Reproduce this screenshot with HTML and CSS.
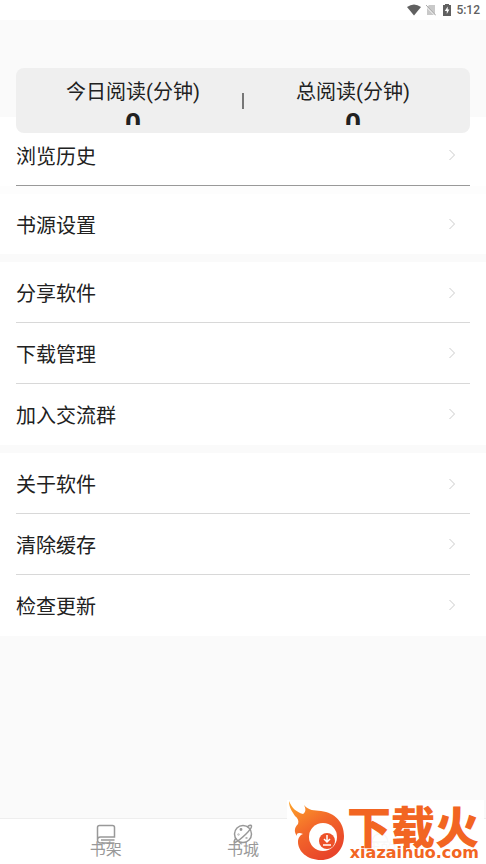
FILE: index.html
```html
<!DOCTYPE html>
<html lang="zh-CN">
<head>
<meta charset="utf-8">
<meta name="viewport" content="width=device-width, initial-scale=1">
<title>我的</title>
<link rel="stylesheet" href="styles.css">
</head>
<body>
<svg class="defs" aria-hidden="true">
  <symbol id="chevron" viewBox="0 0 8 12"><path d="M1.5 1 6.5 6 1.5 11" fill="none" stroke="currentColor"/></symbol>
</svg>
<header class="status">
  <svg class="wifi" viewBox="0 0 14 12" aria-hidden="true"><path d="M0 3Q7-2 14 3L7 11.500Z" fill="currentColor"/></svg>
  <svg class="sim" viewBox="0 0 10 12" aria-hidden="true"><path d="M3 1H9V11L1 3Z M1 4 8 11H1Z" fill="#c9c9c9"/><path d="M0 1 10 11.500" stroke="#aaa"/></svg>
  <svg class="battery" viewBox="0 0 8 12" aria-hidden="true"><path d="M0 1H2V0H6V1H8V12H0Z" fill="currentColor"/><path d="M4.700 2.500 1.800 7H3.800V10L6.400 5.500H4.700Z" fill="#fff"/></svg>
  <time>5:12</time>
</header>
<main>
  <section class="summary">
    <div class="stat"><span>今日阅读(分钟)</span><strong>0</strong></div>
    <i class="divider"></i>
    <div class="stat"><span>总阅读(分钟)</span><strong>0</strong></div>
  </section>
  <nav class="menu">
    <div class="group history"><a class="row" href="#">浏览历史<svg><use href="#chevron"/></svg></a></div>
    <div class="group single"><a class="row" href="#">书源设置<svg><use href="#chevron"/></svg></a></div>
    <div class="group">
      <a class="row" href="#">分享软件<svg><use href="#chevron"/></svg></a>
      <a class="row" href="#">下载管理<svg><use href="#chevron"/></svg></a>
      <a class="row" href="#">加入交流群<svg><use href="#chevron"/></svg></a>
    </div>
    <div class="group">
      <a class="row" href="#">关于软件<svg><use href="#chevron"/></svg></a>
      <a class="row" href="#">清除缓存<svg><use href="#chevron"/></svg></a>
      <a class="row" href="#">检查更新<svg><use href="#chevron"/></svg></a>
    </div>
  </nav>
</main>
<nav class="tabs">
  <a href="#"><svg viewBox="0 0 20 20" aria-hidden="true"><path d="M1.500 16V3.500Q1.500 1.500 3.500 1.500H16.500Q18.500 1.500 18.500 3.500V13H4.500Q1.500 13 1.500 16Q1.500 19 4.500 19H18.500M5 16H18.500"/></svg>书架</a>
  <a href="#"><svg viewBox="0 0 20 20" aria-hidden="true"><circle cx="10" cy="10" r="8.500"/><path d="M14 3Q18 0 18.500 2Q19 4 13 10T2 18.500Q0 18 3 14"/><circle cx="8" cy="5.500" r=".7"/><circle cx="5.500" cy="10.500" r=".3"/><circle cx="13.500" cy="14" r=".3"/></svg>书城</a>
  <a href="#"><svg viewBox="0 0 20 20" aria-hidden="true"><circle cx="10" cy="6" r="4"/><path d="M2 18Q3 10 10 10T18 18Z"/></svg>我的</a>
</nav>
<aside class="brand">
  <svg class="flame" viewBox="0 0 60 64" aria-hidden="true">
    <defs><linearGradient id="fire" x1="0" y1="0" x2=".6" y2="1"><stop offset="0" stop-color="#fda52b"/><stop offset=".5" stop-color="#f3692a"/><stop offset="1" stop-color="#e8442a"/></linearGradient></defs>
    <path d="M2 1C5 8 9 12 16 14C19 12 19 9 17 5C22 11 27 10 34 11C48 13 57 22 57 36C57 50 47 60 34 60C20 60 11 51 11 42C11 38 13 35 16 34C12 32 9 33 10 36C7 32 7 28 11 24C12 21 11 18 8 16C5 11 2 8 2 1Z" fill="url(#fire)"/>
    <circle cx="36" cy="37" r="14" fill="#fff"/>
    <circle cx="40" cy="41" r="8" fill="#ed5129"/>
    <path d="M40 35V41M37 39 40 42 43 39M36 45H44" fill="none" stroke="#fff" stroke-width="1.500"/>
  </svg>
  <div class="brand-text"><b>下载火</b><span>xiazaihuo.com</span></div>
</aside>
</body>
</html>
```

FILE: styles.css
```css
* { box-sizing: border-box; }
body {
  margin: 0;
  min-height: 100vh;
  display: flex;
  flex-direction: column;
  position: relative;
  background: #fafafa;
  color: #212121;
  font-family: Roboto, "Noto Sans CJK SC", sans-serif;
}
a { color: inherit; text-decoration: none; }
.defs { position: absolute; width: 0; height: 0; }
.status {
  height: 20px;
  padding: 0 6px;
  display: flex;
  align-items: center;
  justify-content: flex-end;
  background: #fff;
  color: #606060;
  font-size: 12px;
  font-weight: 500;
}
.status svg { height: 12px; }
.wifi { width: 14px; margin-right: 5px; }
.sim { width: 10px; margin-right: 7px; }
.battery { width: 8px; margin-right: 5px; }
main { flex: 1; padding-top: 48px; }
.summary {
  position: relative;
  height: 65px;
  margin: 0 16px -16px;
  padding: 8px;
  display: flex;
  align-items: center;
  border-radius: 8px;
  background: #efefef;
}
.stat {
  flex: 1;
  height: 49px;
  overflow: hidden;
  display: flex;
  flex-direction: column;
  align-items: center;
  font-size: 20px;
  line-height: 32px;
}
.stat strong { font-size: 28px; }
.divider { width: 2px; height: 16px; background: #777; }
.menu { display: flex; flex-direction: column; gap: 8px; }
.group { padding: 0 16px; background: #fff; }
.history { padding-top: 8px; box-shadow: 0 8px #fdfdfd; }
.row {
  height: 61px;
  padding-right: 14px;
  display: flex;
  align-items: center;
  justify-content: space-between;
  border-bottom: 1px solid #d8d8d8;
  font-size: 20px;
}
.row:last-child { border-bottom-color: transparent; }
.single .row { height: 60px; }
.history .row { border-bottom-color: #999; }
.group + .group .row:first-child { padding-top: 1px; }
.row svg { width: 8px; height: 12px; color: #ccc; }
.tabs {
  height: 46px;
  padding: 5px 37px 0;
  display: grid;
  grid-template-columns: repeat(3, 1fr);
  border-top: 1px solid #eee;
  background: #fff;
  color: #999;
  font-size: 16px;
  line-height: 16px;
}
.tabs a { display: flex; flex-direction: column; align-items: center; }
.tabs svg {
  width: 20px;
  height: 20px;
  margin-bottom: -2px;
  fill: none;
  stroke: currentColor;
  stroke-width: 1.5;
}
.brand {
  position: absolute;
  right: 2px;
  bottom: 0;
  width: 197px;
  height: 64px;
  display: flex;
  background: rgba(255, 255, 255, .93);
  color: #f26522;
}
.flame { width: 60px; height: 64px; flex: none; }
.brand-text {
  padding: 6px 2px 0 0;
  display: flex;
  flex-direction: column;
  align-items: flex-end;
  white-space: nowrap;
}
.brand-text b {
  font-family: "Noto Sans CJK SC", sans-serif;
  font-size: 44px;
  font-weight: 900;
  line-height: 38px;
}
.brand-text span {
  font-family: "DejaVu Sans", sans-serif;
  font-size: 16px;
  font-weight: 700;
  line-height: 18px;
}
```
